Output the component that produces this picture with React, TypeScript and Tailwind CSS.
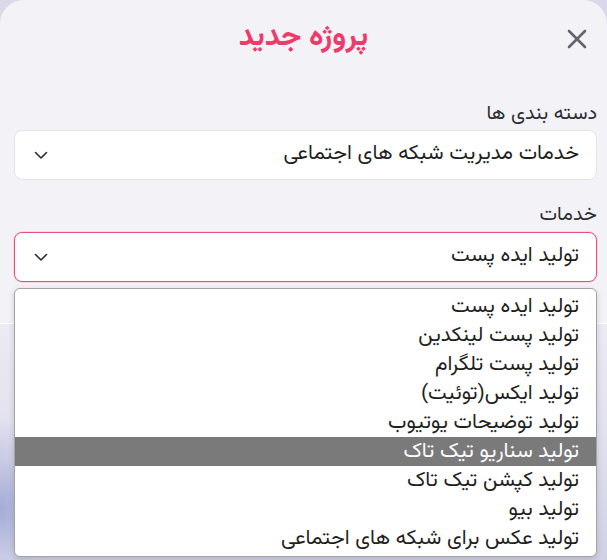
import { useState } from 'react';

const SERVICES = [
  'تولید ایده پست',
  'تولید پست لینکدین',
  'تولید پست تلگرام',
  'تولید ایکس(توئیت)',
  'تولید توضیحات یوتیوب',
  'تولید سناریو تیک تاک',
  'تولید کپشن تیک تاک',
  'تولید بیو',
  'تولید عکس برای شبکه های اجتماعی',
];

function Chevron() {
  return (
    <svg width="14" height="9" viewBox="0 0 14 9" fill="none" className="shrink-0">
      <path d="M1.5 1.5 7 7l5.5-5.5" stroke="#2b2b2b" strokeWidth="1.6" strokeLinecap="round" strokeLinejoin="round" />
    </svg>
  );
}

export default function App() {
  const [hovered] = useState(5);

  return (
    <div
      className="w-[607px] h-[560px] overflow-hidden flex flex-col bg-[#d9d9ea]"
      style={{ fontFamily: '"Vazirmatn", "Noto Sans Arabic", "DejaVu Sans", sans-serif' }}
    >
      {/* Modal panel */}
      <div dir="rtl" className="h-[324px] shrink-0 bg-[#f3f2f7] rounded-t-[24px] border-b border-white">
        {/* Header */}
        <div className="h-[80px] grid grid-cols-[1fr_auto_1fr] items-center">
          <button className="justify-self-start mr-[20px] mb-[2px] text-[#64646c]">
            <svg width="20" height="20" viewBox="0 0 20 20" fill="none">
              <path d="M2 2l16 16M18 2 2 18" stroke="currentColor" strokeWidth="2.6" strokeLinecap="round" />
            </svg>
          </button>
          <h2 className="text-[30px] font-bold text-[#ee3b6b] leading-none mb-[4px]">پروژه جدید</h2>
          <div />
        </div>

        {/* Category */}
        <label className="block mt-[21px] mb-[2px] mr-[10px] text-[20px] leading-[27px] text-[#2e2e33]">دسته بندی ها</label>
        <div className="h-[50px] mr-[10px] ml-[14px] bg-white border border-[#e3e3ea] rounded-[8px] flex items-center justify-between pr-[17px] pl-[19px]">
          <span className="text-[21px] text-[#1f1f22] mb-[2px]">خدمات مدیریت شبکه های اجتماعی</span>
          <Chevron />
        </div>

        {/* Services */}
        <label className="block mt-[22px] mb-[3px] mr-[10px] text-[20px] leading-[27px] text-[#2e2e33]">خدمات</label>
        <div className="relative mr-[10px] ml-[14px]">
          <div className="h-[50px] bg-white border-[1.5px] border-[#e8507a] rounded-[8px] shadow-[0_0_0_1px_rgba(236,80,122,0.15)] flex items-center justify-between pr-[17px] pl-[19px]">
            <span className="text-[21px] text-[#1f1f22] mb-[2px]">تولید ایده پست</span>
            <Chevron />
          </div>

          {/* Open listbox */}
          <ul className="absolute top-[56px] left-0 right-0 z-10 bg-white border border-[#a3a3a6] rounded-[6px] shadow-[0_2px_6px_rgba(0,0,0,0.15)] py-[3px] overflow-hidden">
            {SERVICES.map((s, i) => (
              <li
                key={s}
                className={`h-[29px] flex items-center pr-[17px] text-[21px] leading-none ${
                  i === hovered ? 'bg-[#7a7a7a] text-white' : 'text-[#1f1f22]'
                }`}
              >
                {s}
              </li>
            ))}
          </ul>
        </div>
      </div>

      {/* Backdrop below the panel */}
      <div className="flex-1 bg-[radial-gradient(ellipse_60px_90px_at_0%_78%,#a3abd6_0%,#c9cce4_55%,transparent_100%),linear-gradient(180deg,#ecebf3_0%,#e2e1ee_45%,#cfd1e6_100%)]" />
    </div>
  );
}
